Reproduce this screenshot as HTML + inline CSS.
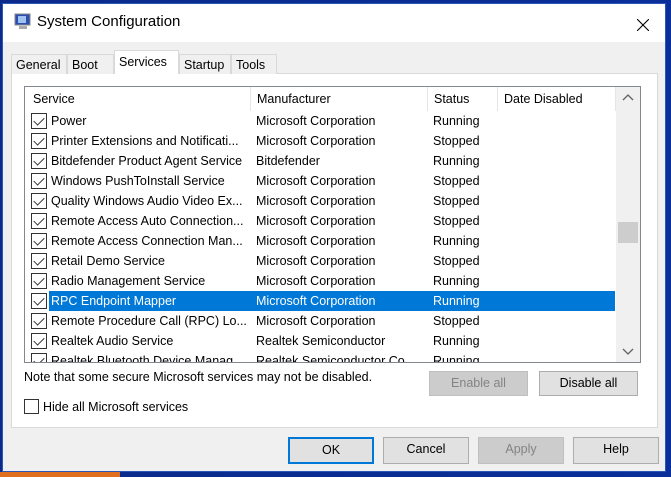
<!DOCTYPE html>
<html><head><style>
*{margin:0;padding:0;box-sizing:border-box}
body{width:671px;height:477px;overflow:hidden;background:linear-gradient(90deg,#0b2a8a,#0a2f9a);font-family:"Liberation Sans",sans-serif;font-size:12px;color:#000;position:relative}
.win{position:absolute;left:2px;top:3px;width:664px;height:469px;background:#f0f0f0;border:1px solid #2a56b8}
.title{position:absolute;left:0;top:0;width:662px;height:38px;background:#fff}
.title span{position:absolute;left:34px;top:9px;font-size:15px}
.abs{position:absolute}
.tab{position:absolute;top:50px;height:20px;border:1px solid #d9d9d9;border-bottom:none;background:#f0f0f0;padding:3px 4px 0;font-size:12.5px}
.panel{position:absolute;left:8px;top:69px;width:647px;height:355px;background:#fff;border:1px solid #d9d9d9}
.list{position:absolute;left:21px;top:82px;width:617px;height:277px;border:1px solid #828790;background:#fff;overflow:hidden}
.hdr{position:absolute;top:0;height:24px;line-height:24px;font-size:12.5px}
.sep{position:absolute;top:0;width:1px;height:24px;background:#e5e5e5}
.row{position:absolute;left:0;width:590px;height:20px;line-height:20px;font-size:12.5px}
.cb{position:absolute;left:6px;top:2px;width:16px;height:16px;border:1px solid #333;background:#fff}
.cb:after{content:"";position:absolute;left:4px;top:1px;width:5px;height:9px;border:solid #333;border-width:0 1.3px 1.3px 0;transform:rotate(45deg)}
.c1{position:absolute;left:26px}.c2{position:absolute;left:231px}.c3{position:absolute;left:408px}
.btn{position:absolute;height:25px;border:1px solid #adadad;background:#e1e1e1;text-align:center;line-height:23px;font-size:12.5px}
.dis{background:#cccccc;border-color:#bfbfbf;color:#838383}
</style></head><body>
<div class="win">
<div class="title">
<svg class="abs" style="left:11px;top:9px" width="18" height="18" viewBox="0 0 18 18"><rect x="1" y="1" width="15" height="11" fill="#2a4fb0" stroke="#888"/><rect x="4" y="3" width="8" height="7" fill="#9fc3ee"/><rect x="5" y="13" width="8" height="3" fill="#aaa"/></svg>
<span>System Configuration</span>
<svg class="abs" style="left:634px;top:15px" width="12" height="12" viewBox="0 0 12 12"><path d="M0 0L12 12M12 0L0 12" stroke="#000" stroke-width="1.1"/></svg>
</div>
<div class="panel"></div>
<div class="tab" style="left:8px;width:56px">General</div>
<div class="tab" style="left:64px;width:47px">Boot</div>
<div class="tab" style="left:111px;top:46px;height:24px;width:65px;background:#fff;padding-top:4px">Services</div>
<div class="tab" style="left:176px;width:52px">Startup</div>
<div class="tab" style="left:228px;width:46px">Tools</div>
<div class="list">
<div class="hdr" style="left:8px">Service</div><div class="sep" style="left:225px"></div>
<div class="hdr" style="left:232px">Manufacturer</div><div class="sep" style="left:402px"></div>
<div class="hdr" style="left:409px">Status</div><div class="sep" style="left:472px"></div>
<div class="hdr" style="left:479px">Date Disabled</div><div class="sep" style="left:590px"></div>
<div class="abs" style="left:591px;top:0;width:24px;height:275px;background:#f0f0f0"></div>
<svg class="abs" style="left:597px;top:7px" width="12" height="8"><path d="M1 6L6 1L11 6" stroke="#606060" fill="none" stroke-width="1.3"/></svg>
<svg class="abs" style="left:597px;top:261px" width="12" height="8"><path d="M1 1L6 6L11 1" stroke="#606060" fill="none" stroke-width="1.3"/></svg>
<div class="abs" style="left:593px;top:135px;width:20px;height:21px;background:#cdcdcd"></div>
<div class="row" style="top:24px"><div class="cb"></div><span class="c1">Power</span><span class="c2">Microsoft Corporation</span><span class="c3">Running</span></div>
<div class="row" style="top:44px"><div class="cb"></div><span class="c1">Printer Extensions and Notificati...</span><span class="c2">Microsoft Corporation</span><span class="c3">Stopped</span></div>
<div class="row" style="top:64px"><div class="cb"></div><span class="c1">Bitdefender Product Agent Service</span><span class="c2">Bitdefender</span><span class="c3">Running</span></div>
<div class="row" style="top:84px"><div class="cb"></div><span class="c1">Windows PushToInstall Service</span><span class="c2">Microsoft Corporation</span><span class="c3">Stopped</span></div>
<div class="row" style="top:104px"><div class="cb"></div><span class="c1">Quality Windows Audio Video Ex...</span><span class="c2">Microsoft Corporation</span><span class="c3">Stopped</span></div>
<div class="row" style="top:124px"><div class="cb"></div><span class="c1">Remote Access Auto Connection...</span><span class="c2">Microsoft Corporation</span><span class="c3">Stopped</span></div>
<div class="row" style="top:144px"><div class="cb"></div><span class="c1">Remote Access Connection Man...</span><span class="c2">Microsoft Corporation</span><span class="c3">Running</span></div>
<div class="row" style="top:164px"><div class="cb"></div><span class="c1">Retail Demo Service</span><span class="c2">Microsoft Corporation</span><span class="c3">Stopped</span></div>
<div class="row" style="top:184px"><div class="cb"></div><span class="c1">Radio Management Service</span><span class="c2">Microsoft Corporation</span><span class="c3">Running</span></div>
<div class="row" style="top:204px"><div class="cb"></div><div class="abs" style="left:24px;top:0;width:566px;height:20px;background:#0078d7"></div><span class="c1" style="color:#fff">RPC Endpoint Mapper</span><span class="c2" style="color:#fff">Microsoft Corporation</span><span class="c3" style="color:#fff">Running</span></div>
<div class="row" style="top:224px"><div class="cb"></div><span class="c1">Remote Procedure Call (RPC) Lo...</span><span class="c2">Microsoft Corporation</span><span class="c3">Stopped</span></div>
<div class="row" style="top:244px"><div class="cb"></div><span class="c1">Realtek Audio Service</span><span class="c2">Realtek Semiconductor</span><span class="c3">Running</span></div>
<div class="row" style="top:264px"><div class="cb"></div><span class="c1">Realtek Bluetooth Device Manag...</span><span class="c2">Realtek Semiconductor Co...</span><span class="c3">Running</span></div>
</div>
<div class="abs" style="left:21px;top:366px;font-size:12.5px">Note that some secure Microsoft services may not be disabled.</div>
<div class="btn dis" style="left:426px;top:367px;width:99px">Enable all</div>
<div class="btn" style="left:536px;top:367px;width:99px">Disable all</div>
<div class="abs" style="left:21px;top:395px;width:15px;height:15px;border:1px solid #333;background:#fff"></div>
<div class="abs" style="left:40px;top:396px;font-size:12.5px">Hide all Microsoft services</div>
<div class="btn" style="left:285px;top:433px;width:86px;height:27px;border:2px solid #0078d7;line-height:23px">OK</div>
<div class="btn" style="left:380px;top:433px;width:86px;height:27px">Cancel</div>
<div class="btn dis" style="left:475px;top:433px;width:86px;height:27px">Apply</div>
<div class="btn" style="left:570px;top:433px;width:86px;height:27px">Help</div>
</div>
<div class="abs" style="left:0;top:472px;width:120px;height:5px;background:#e07020"></div>
</body></html>
